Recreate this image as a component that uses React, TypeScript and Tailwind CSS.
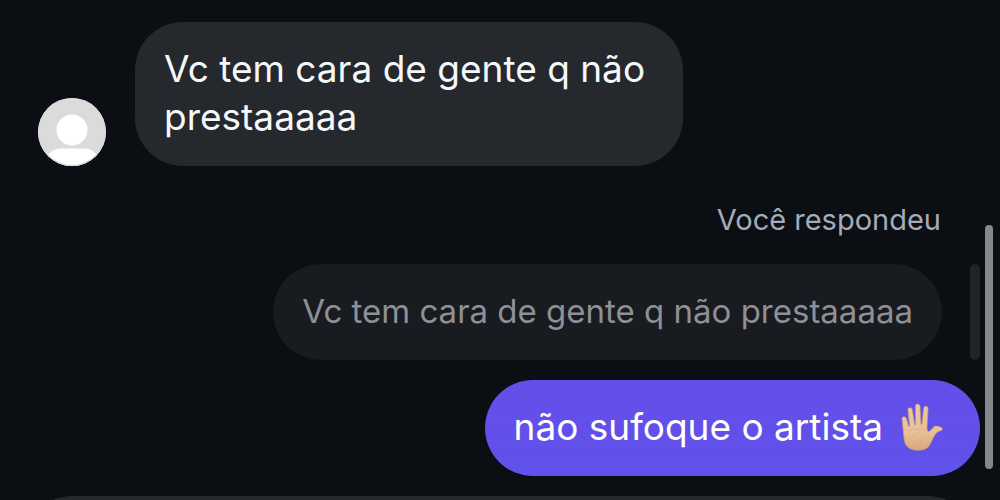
import type { ReactNode } from "react";
import clsx from "clsx";

function Avatar() {
  return (
    <svg
      viewBox="0 0 68 68"
      className="size-[68px] shrink-0"
      role="img"
      aria-label="Avatar"
    >
      <defs>
        <clipPath id="avatar-clip">
          <circle cx="34" cy="34" r="34" />
        </clipPath>
      </defs>
      <g clipPath="url(#avatar-clip)">
        <rect width="68" height="68" fill="#dbdbdb" />
        <circle cx="34" cy="32" r="15.5" fill="#fff" />
        <path d="M10 57C14 52 18 50.5 24 50.5H45C51 50.5 55 52 59 57L60 68H9Z" fill="#fff" />
        <circle cx="34" cy="34" r="33.5" fill="none" stroke="#dbdbdb" strokeWidth="1.5" />
      </g>
    </svg>
  );
}

function HandEmoji() {
  return (
    <svg
      viewBox="0 0 126 144"
      className="mr-2 h-12 w-[42px] shrink-0"
      role="img"
      aria-label="Mão levantada"
    >
      <defs>
        <linearGradient id="skin" x1="0" y1="0" x2="0" y2="1">
          <stop offset="0" stopColor="#e9c9a4" />
          <stop offset="0.6" stopColor="#e8c098" />
          <stop offset="1" stopColor="#d9a67c" />
        </linearGradient>
      </defs>
      <path
        d="M3 49C1 40 13 38 16 46L23 70L26 70L21 22C20 13 32 11 34 20L41 65L44 65L43 10C43 1 56 1 57 10L60 64L63 64L68 16C69 7 82 8 81 18L78 76C79 86 84 88 89 82L96 74C102 67 109 69 120 73C127 76 124 83 117 84C109 85 106 90 101 97C94 108 92 118 84 129C77 139 66 142 51 142C29 142 14 133 10 113C7 94 6 70 3 49Z"
        fill="url(#skin)"
        stroke="#c9986f"
        strokeWidth="2"
      />
      <path
        d="M17 84C34 77 54 77 76 82M22 102C39 100 48 94 57 86M80 84C62 91 57 109 59 130"
        fill="none"
        stroke="#dcae86"
        strokeWidth="2"
        strokeLinecap="round"
      />
    </svg>
  );
}

type BubbleProps = {
  children: ReactNode;
  className?: string;
};

function Bubble({ children, className }: BubbleProps) {
  return (
    <div
      className={clsx(
        "rounded-[48px] px-[29px] pt-[23px] pb-[25px] leading-[48px]",
        className
      )}
    >
      {children}
    </div>
  );
}

export default function App() {
  return (
    <main className="relative flex h-screen flex-col overflow-hidden bg-[#0b0e13] font-['Inter','Liberation_Sans',sans-serif]">
      <section className="flex items-end gap-[29px] pt-[22px] pl-[38px]">
        <Avatar />
        <Bubble className="max-w-[548px] bg-[#25282d] text-[37px] text-[#f5f8fa]">
          <p>Vc tem cara de gente q não prestaaaaa</p>
        </Bubble>
      </section>

      <section className="flex flex-col items-end pt-[34px] pr-5">
        <p className="pr-[39px] text-[29px] leading-10 text-[#a5abb8]">
          Você respondeu
        </p>
        <div className="mt-6 flex gap-7">
          <Bubble className="bg-[#181b20] text-[33px] text-[#8e9095]">
            <p>Vc tem cara de gente q não prestaaaaa</p>
          </Bubble>
          <div className="w-[10px] rounded-full bg-[#202328]" />
        </div>
        <Bubble className="mt-5 flex items-center gap-[18px] bg-linear-to-b from-[#664de9] to-[#5f52eb] text-[37px] text-white">
          <p>não sufoque o artista</p>
          <HandEmoji />
        </Bubble>
      </section>

      <form className="mt-5 shrink-0 px-6">
        <input
          type="text"
          aria-label="Mensagem"
          className="block h-24 w-full rounded-full bg-[#25282d] px-8 text-[37px] text-white outline-none"
        />
      </form>

      <div className="absolute top-[225px] right-[7px] h-[244px] w-2 rounded-full bg-[#85888a]" />
    </main>
  );
}
